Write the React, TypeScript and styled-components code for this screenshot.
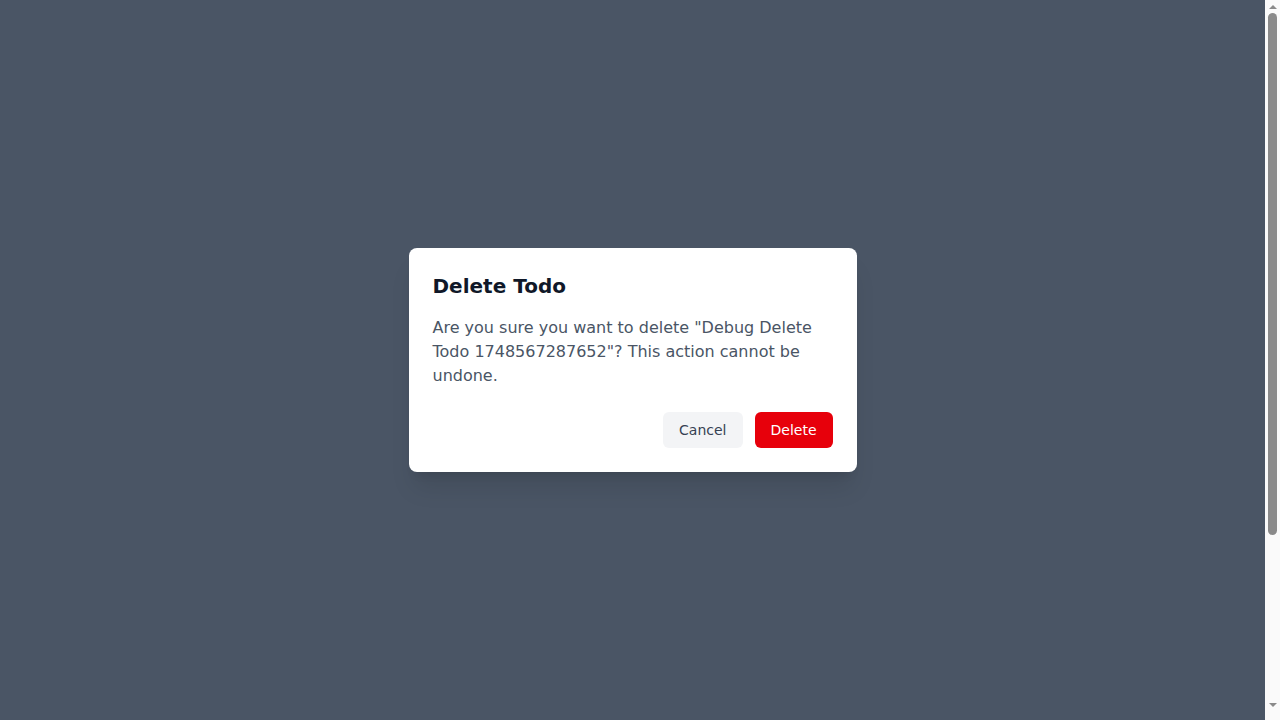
import React from "react";
import styled, { createGlobalStyle } from "styled-components";

const Global = createGlobalStyle`
  html, body { margin: 0; padding: 0; }
  body {
    font-family: "DejaVu Sans", sans-serif;
    background: #4a5565;
    overflow: hidden;
  }
  * { box-sizing: border-box; }
`;

const Screen = styled.div`
  display: flex;
  width: 100vw;
  height: 100vh;
`;

const Backdrop = styled.div`
  flex: 1;
  min-width: 0;
  background: #4a5565;
  display: flex;
  align-items: center;
  justify-content: center;
  padding: 16px;
`;

const ScrollBar = styled.div`
  width: 15px;
  flex: none;
  background: #fafafa;
  display: flex;
  flex-direction: column;
  align-items: center;
  padding: 5px 0 13px;
`;

const Arrow = styled.div<{ $dir: "up" | "down" }>`
  width: 0;
  height: 0;
  border-left: 4px solid transparent;
  border-right: 4px solid transparent;
  ${(p) =>
    p.$dir === "up"
      ? "border-bottom: 4px solid #8a8a8a;"
      : "border-top: 4px solid #8a8a8a;"}
`;

const Thumb = styled.div`
  width: 9px;
  height: 522px;
  margin-top: 4px;
  border-radius: 5px;
  background: #8a8a8a;
`;

const Spacer = styled.div`
  flex: 1;
`;

const Dialog = styled.div`
  width: 100%;
  max-width: 448px;
  background: #ffffff;
  border-radius: 8px;
  padding: 24px;
  box-shadow: 0 20px 25px -5px rgba(0, 0, 0, 0.1), 0 8px 10px -6px rgba(0, 0, 0, 0.1);
`;

const Title = styled.h3`
  margin: 0 0 16px;
  font-size: 20px;
  line-height: 28px;
  font-weight: 600;
  color: #101828;
`;

const Message = styled.p`
  margin: 0 0 24px;
  font-size: 16px;
  line-height: 24px;
  color: #4a5565;
`;

const Actions = styled.div`
  display: flex;
  justify-content: flex-end;
  gap: 12px;
`;

const Button = styled.button<{ $variant: "secondary" | "danger" }>`
  font-family: inherit;
  font-size: 14px;
  line-height: 20px;
  padding: 8px 16px;
  border: none;
  border-radius: 6px;
  cursor: pointer;
  background: ${(p) => (p.$variant === "danger" ? "#e7000b" : "#f3f4f6")};
  color: ${(p) => (p.$variant === "danger" ? "#ffffff" : "#364153")};
`;

export default function App() {
  return (
    <>
      <Global />
      <Screen>
        <Backdrop>
          <Dialog role="dialog" aria-labelledby="delete-title">
            <Title id="delete-title">Delete Todo</Title>
            <Message>
              Are you sure you want to delete "Debug Delete Todo 1748567287652"? This action cannot be undone.
            </Message>
            <Actions>
              <Button $variant="secondary">Cancel</Button>
              <Button $variant="danger">Delete</Button>
            </Actions>
          </Dialog>
        </Backdrop>
        <ScrollBar aria-hidden="true">
          <Arrow $dir="up" />
          <Thumb />
          <Spacer />
          <Arrow $dir="down" />
        </ScrollBar>
      </Screen>
    </>
  );
}
